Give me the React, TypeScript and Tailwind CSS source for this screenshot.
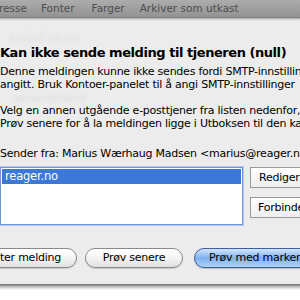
import React from "react";

export default function App() {
  const font = { fontFamily: '"DejaVu Sans", "Liberation Sans", sans-serif' };
  return (
    <div className="w-[300px] h-[300px] overflow-hidden bg-white relative" style={font}>
      {/* toolbar */}
      <div className="h-[17px] bg-gradient-to-b from-[#acacac] to-[#939393] flex items-center text-[10.5px] text-[#4d4d4d] whitespace-nowrap -ml-[1px]">
        <span>resse</span>
        <span className="ml-[14px]">Fonter</span>
        <span className="ml-[17px]">Farger</span>
        <span className="ml-[15px]">Arkiver som utkast</span>
      </div>
      <div className="h-[267px] bg-[#ececec] relative">
        <div className="h-[4px] bg-gradient-to-b from-[#6b6b6b] via-[#cfcfcf] to-[#ececec]" />
        {/* ghost text */}
        <div className="absolute left-[8px] top-[11px] text-[12px] text-[#e0e0e0] blur-[1px]">xxsjuhus.no</div>
        <div className="absolute left-[12px] top-[74px] text-[11px] text-[#dedede] blur-[1px]">semesterkort</div>
        <div className="text-black whitespace-nowrap">
          <div className="mt-[24px] text-[13px] font-bold leading-[16px] tracking-[-0.45px]">
            Kan ikke sende melding til tjeneren (null)
          </div>
          <div className="mt-[4px] text-[11px] leading-[13px] tracking-[-0.24px]">
            <div>Denne meldingen kunne ikke sendes fordi SMTP-innstillinger</div>
            <div>angitt. Bruk Kontoer-panelet til å angi SMTP-innstillinger</div>
          </div>
          <div className="mt-[13px] text-[11px] leading-[13px] tracking-[-0.24px]">
            <div>Velg en annen utgående e-posttjener fra listen nedenfor, eller</div>
            <div>Prøv senere for å la meldingen ligge i Utboksen til den kan sendes</div>
          </div>
          <div className="mt-[17px] text-[11px] leading-[13px] tracking-[-0.24px]">
            Sender fra: Marius Wærhaug Madsen &lt;marius@reager.no&gt;
          </div>
        </div>
        {/* list + side buttons */}
        <div className="mt-[7px] flex items-start">
          <div className="shrink-0 w-[243px] h-[58px] bg-white border border-[#6f95d4] shadow-[0_0_0_1px_#b3cbef] p-[1px]">
            <div className="h-[15px] bg-[#3b78d8] text-white text-[11.5px] leading-[15px] pl-[3px] tracking-[-0.2px]">
              reager.no
            </div>
          </div>
          <div className="shrink-0 ml-[7px] flex flex-col gap-[9px] whitespace-nowrap text-[11px] tracking-[-0.24px]">
            <div className="h-[21px] w-[80px] border border-[#9a9a9a] bg-gradient-to-b from-white to-[#efefef] leading-[19px] pl-[8px]">
              Rediger SMTP
            </div>
            <div className="h-[21px] w-[80px] border border-[#9a9a9a] bg-gradient-to-b from-white to-[#efefef] leading-[19px] pl-[7px]">
              Forbindelse
            </div>
          </div>
        </div>
        {/* bottom buttons */}
        <div className="mt-[23px] flex items-center whitespace-nowrap text-[11px] tracking-[-0.24px]">
          <div className="shrink-0 -ml-[30px] w-[107px] h-[20px] rounded-full border border-[#8a8a8a] bg-gradient-to-b from-white via-[#f4f4f4] to-[#e0e0e0] shadow-[0_1px_1px_rgba(0,0,0,0.15)] flex items-center justify-end pr-[15px]">
            Avbryter melding
          </div>
          <div className="shrink-0 ml-[8px] w-[98px] h-[20px] rounded-full border border-[#8a8a8a] bg-gradient-to-b from-white via-[#f4f4f4] to-[#e0e0e0] shadow-[0_1px_1px_rgba(0,0,0,0.15)] flex items-center justify-center">
            Prøv senere
          </div>
          <div className="shrink-0 ml-[11px] w-[160px] h-[20px] rounded-full border border-[#3f5f9e] bg-gradient-to-b from-[#d2e6fc] via-[#7fb0ef] to-[#acd4fb] shadow-[0_1px_1px_rgba(0,0,0,0.2)] flex items-center pl-[14px]">
            Prøv med markert tjener
          </div>
        </div>
      </div>
      <div className="h-[6px] bg-gradient-to-b from-[#6e6e6e] via-[#c8c8c8] to-white" />
    </div>
  );
}
